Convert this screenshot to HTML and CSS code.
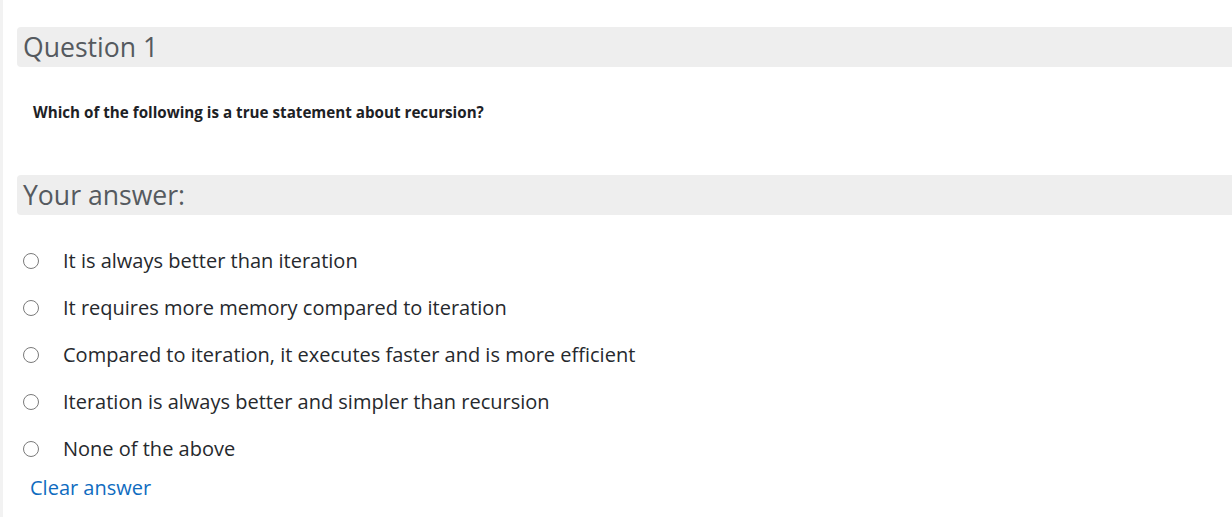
FILE: index.html
```html
<!DOCTYPE html>
<html>
<head>
<meta charset="utf-8">
<link rel="stylesheet" href="styles.css">
</head>
<body>
<div class="page">
  <div class="content">
    <h2 class="section-head">Question 1</h2>
    <p class="question">Which of the following is a true statement about recursion?</p>
    <h2 class="section-head answer-head">Your answer:</h2>
    <div class="options">
      <label class="option"><span class="radio"></span><span class="opt-text">It is always better than iteration</span></label>
      <label class="option"><span class="radio"></span><span class="opt-text">It requires more memory compared to iteration</span></label>
      <label class="option"><span class="radio"></span><span class="opt-text">Compared to iteration, it executes faster and is more efficient</span></label>
      <label class="option"><span class="radio"></span><span class="opt-text">Iteration is always better and simpler than recursion</span></label>
      <label class="option"><span class="radio"></span><span class="opt-text">None of the above</span></label>
    </div>
    <a class="clear" href="#">Clear answer</a>
  </div>
</div>
</body>
</html>
```
FILE: styles.css
```css
html, body {
  margin: 0;
  padding: 0;
  background: #fff;
}
body {
  font-family: "Open Sans", "Noto Sans", sans-serif;
  color: #1d2125;
}
.page {
  border-left: 3px solid #f2f2f2;
  min-height: 517px;
  box-sizing: border-box;
}
.content {
  padding: 27px 0 0 14px;
}
.section-head {
  margin: 0;
  background: #eeeeee;
  border-radius: 4px 0 0 4px;
  height: 40px;
  line-height: 40px;
  font-size: 26.6px;
  font-weight: 400;
  color: #555a5f;
  padding-left: 6px;
}
.question {
  margin: 0;
  padding: 35px 0 0 16px;
  height: 72px;
  box-sizing: border-box;
  font-size: 15.2px;
  font-weight: 700;
  line-height: 20px;
  color: #1d2125;
}
.answer-head {
  margin-top: 36px;
}
.options {
  display: flex;
  flex-direction: column;
  padding-top: 22px;
}
.option {
  display: flex;
  align-items: center;
  height: 47px;
  font-size: 20px;
  color: #26292d;
}
.radio {
  width: 16px;
  height: 16px;
  border: 1.5px solid #7a7a7a;
  border-radius: 50%;
  margin-left: 6px;
  margin-right: 24px;
  box-sizing: border-box;
  flex: none;
}
.clear {
  display: inline-block;
  margin-left: 13px;
  margin-top: 3px;
  font-size: 20px;
  line-height: 26px;
  color: #0f6cbf;
  text-decoration: none;
}
```
